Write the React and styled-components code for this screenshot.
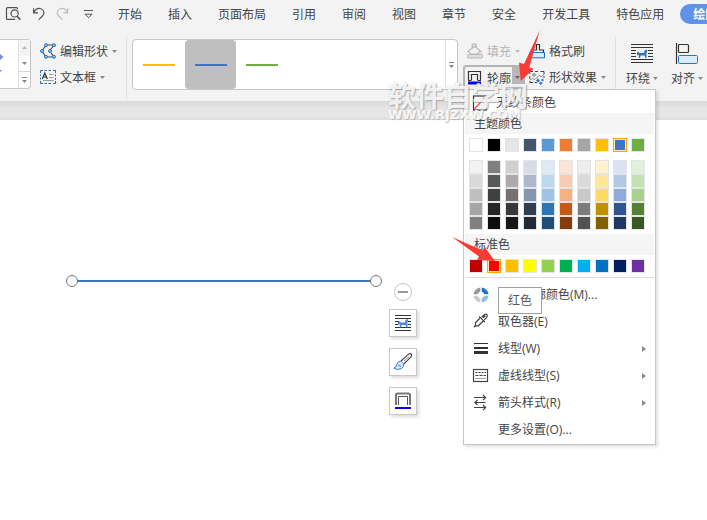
import React from "react";
import styled, { createGlobalStyle } from "styled-components";

const GlobalStyle = createGlobalStyle`
  * { box-sizing: border-box; }
  body {
    margin: 0;
    overflow: hidden;
    background: #fff;
    color: #444;
    font-family: "Open Sans", "Noto Sans CJK SC", sans-serif;
    font-size: 12px;
    line-height: 16px;
  }
  button {
    margin: 0;
    padding: 0;
    border: 0;
    background: none;
    color: inherit;
    font: inherit;
    white-space: nowrap;
  }
  svg { display: block; flex: none; overflow: visible; }
`;

const Page = styled.div`
  position: relative;
  display: flex;
  flex-direction: column;
  min-height: 100vh;
  overflow: hidden;
`;

const Header = styled.header`
  position: relative;
  z-index: 1;
  background: #f3f3f3;
`;

const TabBar = styled.nav`
  display: flex;
  align-items: center;
  height: 27px;
`;

const QuickAccess = styled.div`
  display: flex;
  gap: 9px;
  padding: 0 22px 0 5px;
`;

const Tabs = styled.div`
  display: flex;
  align-items: center;
  gap: 26px;
`;

const Tab = styled.button`
  flex: none;
  height: 20px;
  padding-top: 2px;
`;

const ActiveTab = styled(Tab)`
  margin-left: -10px;
  padding: 2px 13px 0;
  border-radius: 10px;
  background: #5f93e8;
  color: #fff;
  font-weight: 700;
`;

const Ribbon = styled.div`
  display: flex;
  height: 74px;
  padding: 10px 0 2px;
`;

const Divider = styled.div`
  flex: none;
  width: 1px;
  background: #dedede;
`;

const ShapeGallery = styled.div`
  display: flex;
  flex: none;
  width: 31px;
  height: 50px;
  margin: 2px 9px 0 0;
  border: 1px solid #c6c6c6;
  border-left: 0;
  border-radius: 0 4px 4px 0;
  background: #fff;
`;

const ShapePreview = styled.div`
  flex: 1;
`;

const Scroller = styled.div`
  display: flex;
  flex-direction: column;
  width: 12px;
  border-left: 1px solid #e2e2e2;
`;

const ScrollButton = styled.button`
  display: flex;
  flex: 1;
  align-items: center;
  justify-content: center;
  border-top: ${(p) => (p.$ruled ? "1px solid #d6d6d6" : "0")};
  background: ${(p) => (p.$muted ? "#f3f3f3" : "transparent")};
`;

const ToolColumn = styled.div`
  display: flex;
  flex: none;
  flex-direction: column;
  gap: 2px;
  padding: 2px ${(p) => p.$end || 0}px 0 0;
`;

const Tool = styled.button`
  display: flex;
  align-items: center;
  gap: 4px;
  height: 24px;
  padding-left: ${(p) => p.$inset || 0}px;
  color: ${(p) => (p.disabled ? "#b4b4b4" : "#444")};
`;

const ToolLabel = styled.span`
  padding-top: 2px;
`;

const LineGallery = styled.div`
  display: flex;
  flex: 1;
  height: 51px;
  margin: 2px 5px 0;
  border: 1px solid #c6c6c6;
  border-radius: 4px;
  background: #fff;
`;

const LineStyle = styled.button`
  display: flex;
  align-items: center;
  justify-content: center;
  width: ${(p) => (p.$selected ? 51 : 52)}px;
  border-radius: 4px;
  background: ${(p) => (p.$selected ? "#bfbfbf" : "transparent")};

  &::before {
    content: "";
    width: 32px;
    height: 2px;
    background: ${(p) => p.$color};
  }
`;

const LineMore = styled(Scroller)`
  margin-left: auto;
`;

const OutlineControl = styled.div`
  position: relative;
  display: flex;
  width: 62px;
  height: 24px;
  margin-right: 4px;
  border: 1px solid #b4b4b4;
  border-bottom: 0;
  border-radius: 3px 3px 0 0;
  box-shadow: inset 1px 1px #b4b4b4;
`;

const OutlineMain = styled.button`
  display: flex;
  flex: 1;
  align-items: center;
  gap: 4px;
  padding-left: 3px;
`;

const OutlineDrop = styled.button`
  display: flex;
  align-items: center;
  justify-content: center;
  width: 12px;
  background: #b8b8b8;
`;

const BigTools = styled.div`
  display: flex;
  flex: none;
  gap: 13px;
  padding: 5px 4px 0 10px;
`;

const BigTool = styled.button`
  display: flex;
  flex-direction: column;
  align-items: center;
  gap: 5px;
  height: 44px;
`;

const BigLabel = styled.span`
  display: flex;
  align-items: center;
  gap: 3px;
`;

const Menu = styled.div`
  position: absolute;
  z-index: 2;
  top: 23px;
  left: -1px;
  width: 193px;
  padding: 0 1px 1px;
  border: 1px solid #c6c6c6;
  background: #fff;
  box-shadow: 2px 2px 3px rgba(0, 0, 0, 0.12);
`;

const NoLine = styled.button`
  display: flex;
  align-items: center;
  gap: 8px;
  width: 100%;
  height: 23px;
  padding: 2px 0 0 7px;
`;

const SectionTitle = styled.div`
  height: 21px;
  padding: 3px 9px;
  background: #f5f5f5;
`;

const SwatchRow = styled.div`
  display: flex;
  gap: 4px;
  padding: ${(p) => p.$top}px 4px ${(p) => p.$bottom}px;
`;

const SwatchStack = styled.div`
  display: flex;
  flex-direction: column;
`;

const Swatch = styled.button`
  display: block;
  width: 14px;
  height: 14px;
  border: 1px solid ${(p) => (p.$active ? "#ffa500" : "#e2e4e7")};
  background: ${(p) => p.$color};
  box-shadow: ${(p) => (p.$active ? "inset 0 0 0 1px #ffe8a6" : "none")};
`;

const SwatchAnchor = styled.div`
  position: relative;
  height: 14px;
`;

const Tooltip = styled.div`
  position: absolute;
  z-index: 1;
  top: 28px;
  left: 11px;
  height: 27px;
  padding: 5px 9px;
  border: 1px solid #a0a0a0;
  background: #fff;
  color: #575757;
  white-space: nowrap;
`;

const MenuList = styled.div`
  padding-top: 3px;
  border-top: 1px solid #dcdcdc;
`;

const MenuItem = styled.button`
  display: flex;
  align-items: center;
  gap: 9px;
  width: 100%;
  height: 27px;
  padding: 0 8px;
`;

const Submenu = styled.svg`
  margin-left: auto;
`;

const Canvas = styled.main`
  position: relative;
  flex: 1;
  background: #fff;
`;

const TopEdge = styled.div`
  height: 19px;
  background: linear-gradient(#d9d9d9, #e5e5e5 35%, #e7e7e7 80%, #dcdcdc);
`;

const LineShape = styled.svg`
  position: absolute;
  top: 153px;
  left: 65px;
`;

const FloatingTools = styled.div`
  position: absolute;
  top: 182px;
  left: 389px;
  display: flex;
  flex-direction: column;
  align-items: center;
  gap: 11px;
`;

const CollapseButton = styled.button`
  display: flex;
  align-items: center;
  justify-content: center;
  width: 18px;
  height: 18px;
  margin-bottom: -3px;
  border: 1px solid #c6c6c6;
  border-radius: 50%;
  background: #fff;
`;

const FloatButton = styled.button`
  display: flex;
  align-items: center;
  justify-content: center;
  width: 28px;
  height: 28px;
  border: 1px solid #c8c8c8;
  background: #fff;
  box-shadow: 2px 2px 3px rgba(0, 0, 0, 0.14);
`;

const Watermark = styled.div`
  position: absolute;
  z-index: 3;
  top: 83px;
  left: 388px;
  color: rgba(255, 255, 255, 0.85);
  white-space: nowrap;
  pointer-events: none;
`;

const WatermarkName = styled.div`
  font-size: 28px;
  font-weight: 700;
  line-height: 27px;
  text-shadow: 1px 1px 1px rgba(140, 140, 140, 0.65), 0 0 2px rgba(160, 160, 160, 0.5);
`;

const WatermarkSite = styled.div`
  font-family: "DejaVu Sans", sans-serif;
  font-size: 13px;
  font-weight: 700;
  line-height: 10px;
  text-shadow: 1px 1px 1px rgba(150, 150, 150, 0.55);
`;

const Pointer = styled.svg`
  position: absolute;
  z-index: 4;
  top: ${(p) => p.$top}px;
  left: ${(p) => p.$left}px;
  pointer-events: none;
`;

const Caret = ({ color = "#8a8a8a" }) => (
  <svg width="5" height="3" viewBox="0 0 5 3"><path d="M0 0H5L2.5 3Z" fill={color} /></svg>
);

const MoreGlyph = () => (
  <svg width="5" height="6" viewBox="0 0 5 6" fill="#888">
    <path d="M0 0H5V1H0ZM0 3H5L2.5 6Z" />
  </svg>
);

const UpGlyph = () => (
  <svg width="5" height="3" viewBox="0 0 5 3"><path d="M0 3H5L2.5 0Z" fill="#b5b5b5" /></svg>
);

const PreviewIcon = () => (
  <svg width="16" height="16" viewBox="0 0 16 16" fill="none" stroke="#505050" strokeWidth="1.2">
    <path d="M12.5 3.2V2.6A1 1 0 0 0 11.6 1.6H2.5A1 1 0 0 0 1.5 2.6V12.4A1 1 0 0 0 2.5 13.4H10" />
    <circle cx="9.6" cy="7.4" r="3.6" />
    <path d="M12 10.2L15.4 13.6" strokeWidth="1.5" />
  </svg>
);

const UndoIcon = () => (
  <svg width="16" height="16" viewBox="0 0 16 16" fill="none" stroke="#555" strokeWidth="1.2">
    <path d="M3.6 2.2V6.8H8M3.8 6.5C5.5 3.2 8.2 1.8 11 2.8C14.2 4 14.8 7.8 12.7 9.8L8.7 13.6" />
  </svg>
);

const RedoIcon = () => (
  <svg width="16" height="16" viewBox="0 0 16 16" fill="none" stroke="#bdbdbd" strokeWidth="1.2">
    <path d="M12.6 2.2V6.8H8.2M12.4 6.5C10.7 3.2 8 1.8 5.2 2.8C2 4 1.4 7.8 3.5 9.8L7.5 13.6" />
  </svg>
);

const CustomizeIcon = () => (
  <svg width="16" height="16" viewBox="0 0 16 16" fill="none" stroke="#555">
    <path d="M4 4.5H13M5 8.2H12L8.5 11.7Z" />
  </svg>
);

const EditShapeIcon = () => (
  <svg width="16" height="16" viewBox="0 0 16 16" fill="none">
    <path d="M6 2L2 8L6 14M6 2H14L9.5 8L14 14H6" stroke="#444" strokeWidth="1.1" />
    <g fill="#8fc4f4" stroke="#2878c8">
      <circle cx="6" cy="2.2" r="1.5" /><circle cx="14" cy="2.2" r="1.5" />
      <circle cx="2" cy="8" r="1.5" /><circle cx="10" cy="8" r="1.5" />
      <circle cx="6" cy="13.8" r="1.5" /><circle cx="14" cy="13.8" r="1.5" />
    </g>
  </svg>
);

const TextBoxIcon = () => (
  <svg width="16" height="14" viewBox="0 0 16 14" fill="none">
    <path d="M.5 3V.5H3M4.5 .5H7M8.5 .5H11M13 .5H15.5V3M15.5 4.5V6.5M15.5 8V10M15.5 11V13.5H13M11 13.5H8.5M7 13.5H4.5M3 13.5H.5V11M.5 9.5V7.5M.5 6V4.5" stroke="#1d70bc" />
    <path d="M2.3 9L4.8 3L7.3 9M3.3 7H6.4" stroke="#333" strokeWidth="1.2" />
    <path d="M9 4.5H13.5M9 7.5H13.5M3 10.5H13.5" stroke="#999" />
  </svg>
);

const FillIcon = () => (
  <svg width="16" height="16" viewBox="0 0 16 16" fill="none" stroke="#b8b8b8">
    <path d="M5.2 4.5V2.5Q5.2 .8 7.2 .8Q9.2 .8 9.2 2.5V4M1 8.2L7.6 3.2L13.5 8L10.5 11H4Z" strokeWidth="1.2" />
    <path d="M13.5 8Q15 9.6 14.2 10.6" />
    <rect x=".5" y="11.5" width="15" height="3.5" rx="1.2" fill="#ddd" />
  </svg>
);

const OutlineIcon = () => (
  <svg width="16" height="14" viewBox="0 0 16 14" fill="none" stroke="#333">
    <path d="M1.5 9V.5H13.5V9M4.5 9V3.5H10.5V9" strokeWidth="1.2" />
    <path d="M1 9.5H4.5M10.5 9.5H14" />
    <path d="M1 12H14" stroke="#0000f5" strokeWidth="3" />
  </svg>
);

const PainterIcon = () => (
  <svg width="16" height="16" viewBox="0 0 16 16" fill="none">
    <path d="M4 8V7H7.5V1.5H10.5V7H14.5V9" stroke="#333" strokeWidth="1.2" />
    <path d="M3.5 9.5H15.5V14.8H3L1.5 13.5Q3.5 12 3.5 9.5Z" fill="#dcebfa" stroke="#1d70bc" />
  </svg>
);

const EffectIcon = () => (
  <svg width="16" height="15" viewBox="0 0 16 15" fill="none">
    <path d="M4 1.5H.8V4M6 1.5H9M11.5 1.5H15V4.5M15 6V8M.8 6V9M.8 11V12.5H4M5.5 12.5H8" stroke="#444" />
    <circle cx="5" cy="5" r="1.3" stroke="#777" />
    <path d="M1 10L3.5 8.5L6 9.5L10 5.5L12.5 6.5L15 4.5" stroke="#888" />
    <path d="M9 8.5L11 10.5L9 12.5L7 10.5ZM13.5 8.5L15 10L13.5 11.5L12 10ZM11.8 11.5L13.6 13.3L11.8 15L10 13.3Z" fill="#2878c8" />
  </svg>
);

const Dog = ({ color }) => (
  <path d="M7 9.5L8.5 8.8L9.5 10H14L14.5 7.5L16.5 6.5L17.5 8L16.5 9.5V15H15.3L14.6 12.5H10.6L10 15H8.8V11.5L7 12.5Z" fill={color} />
);

const WrapIcon = () => (
  <svg width="24" height="22" viewBox="0 0 24 22">
    <path d="M1 2.5H23M1 5.5H23M1 8.5H6M1 11.5H6M1 14.5H6M18 8.5H23M18 11.5H23M18 14.5H23M1 17.5H23M1 20.5H23" stroke="#333" />
    <g transform="translate(0 1)"><Dog color="#2878c8" /></g>
  </svg>
);

const AlignIcon = () => (
  <svg width="24" height="22" viewBox="0 0 24 22" fill="none">
    <path d="M1.5 1V22" stroke="#333" strokeWidth="1.2" />
    <rect x="3.5" y="2.5" width="10" height="8" rx="1" stroke="#333" strokeWidth="1.2" />
    <rect x="3.5" y="13.5" width="19" height="8" rx="1" fill="#dcebfa" stroke="#2878c8" />
  </svg>
);

const NoLineIcon = () => (
  <svg width="16" height="16" viewBox="0 0 16 16" fill="none">
    <rect x="1.5" y="1" width="13" height="14" stroke="#333" strokeWidth="1.2" />
    <path d="M2 14.5L14 1.5" stroke="#d55" strokeWidth="1.3" />
  </svg>
);

const PaletteIcon = () => (
  <svg width="16" height="16" viewBox="0 0 16 16">
    <path d="M7.3 .5A7.5 7.5 0 0 0 .5 7.3H4.3L7.3 4.3Z" fill="#9a9a9a" />
    <path d="M8.7 .5A7.5 7.5 0 0 1 15.5 7.3H11.7L8.7 4.3Z" fill="#2072cc" />
    <path d="M15.5 8.7A7.5 7.5 0 0 1 8.7 15.5V11.7L11.7 8.7Z" fill="#91bae9" />
    <path d="M.5 8.7A7.5 7.5 0 0 0 7.3 15.5V11.7L4.3 8.7Z" fill="#cbcbcb" />
  </svg>
);

const DropperIcon = () => (
  <svg width="16" height="16" viewBox="0 0 16 16" fill="none" stroke="#444" strokeWidth="1.2">
    <path d="M7.5 3.5L2.5 8.8V11L1 13L3.2 11.8H5.2L11 6.5" />
    <path d="M6.2 2.3L11.8 8M8.7 3.2L11 1Q13 -.5 14 .7Q15 2 13.3 3.8L11.3 5.8" />
    <path d="M10 3.5L12.2 1.5" strokeWidth="2" />
  </svg>
);

const WeightIcon = () => (
  <svg width="16" height="16" viewBox="0 0 16 16" fill="#333">
    <path d="M1 2H15V3H1ZM1 6H15V8H1ZM1 10H15V13H1Z" />
  </svg>
);

const DashIcon = () => (
  <svg width="16" height="16" viewBox="0 0 16 16" fill="none" stroke="#444">
    <rect x=".5" y="1.5" width="14" height="12" strokeWidth="1.2" />
    <path d="M2.5 4.5H13" strokeDasharray="2 1" />
    <path d="M2.5 7.5H13" strokeDasharray="3 1" />
    <path d="M2.5 10.5H13" strokeDasharray="1 1" />
  </svg>
);

const ArrowsIcon = () => (
  <svg width="16" height="16" viewBox="0 0 16 16" fill="none" stroke="#444" strokeWidth="1.1">
    <path d="M1 2.5H12.5M10 0L12.7 2.5L10 5M12.5 7.5H2M4.5 5L1.7 7.5L4.5 10M1 12.5H12.5M10 10L12.7 12.5L10 15" />
  </svg>
);

const BlankIcon = () => <svg width="16" height="16" viewBox="0 0 16 16" />;

const FloatWrapIcon = () => (
  <svg width="18" height="18" viewBox="0 0 18 18">
    <path d="M1 1.5H17M1 4.5H17M1 7.5H5M1 10.5H4M14 7.5H17M14 10.5H17M1 13.5H17M1 16.5H17" stroke="#333" strokeWidth="1.1" />
    <g transform="translate(-3 -1.5)"><Dog color="#4b87da" /></g>
  </svg>
);

const BrushIcon = () => (
  <svg width="20" height="18" viewBox="0 0 20 18" fill="none">
    <path d="M8 8L15.5 1.2Q17.5 0 18.5 1.5Q19 3 17.8 4.2L10.8 11" stroke="#444" strokeWidth="1.1" />
    <path d="M11 8L16 3.5" stroke="#888" />
    <path d="M8 8Q5 8 4 11Q3.5 14.5 .8 15.2Q4 17.4 8 15.8Q11 14.5 10.8 11Z" fill="#dcebfa" stroke="#3d80d4" />
    <path d="M5 12L8 13.5" stroke="#3d80d4" />
  </svg>
);

const FloatOutlineIcon = () => (
  <svg width="18" height="18" viewBox="0 0 18 18" fill="none">
    <path d="M2 13V3Q2 1.5 3.5 1.5H14.5Q16 1.5 16 3V13" stroke="#777" strokeWidth="2" />
    <path d="M4.5 13V4.5H13.5V13" stroke="#555" />
    <path d="M1 16H17" stroke="#0000f5" strokeWidth="2" />
  </svg>
);

const tabs = ["开始", "插入", "页面布局", "引用", "审阅", "视图", "章节", "安全", "开发工具", "特色应用"];

const themeColors = ["#ffffff", "#000000", "#e7e6e6", "#44546a", "#5b9bd5", "#ed7d31", "#a5a5a5", "#ffc000", "#4472c4", "#70ad47"];

const themeTints = [
  ["#f2f2f2", "#d9d9d9", "#bfbfbf", "#a6a6a6", "#808080"],
  ["#808080", "#595959", "#404040", "#262626", "#0d0d0d"],
  ["#d0cece", "#aeaaaa", "#757171", "#3a3838", "#181717"],
  ["#d6dce5", "#adb9ca", "#8497b0", "#333f50", "#222a35"],
  ["#deebf7", "#bdd7ee", "#9dc3e6", "#2e75b6", "#1f4e79"],
  ["#fbe5d6", "#f8cbad", "#f4b183", "#c55a11", "#843c0c"],
  ["#ededed", "#dbdbdb", "#c9c9c9", "#7c7c7c", "#525252"],
  ["#fff2cc", "#ffe699", "#ffd966", "#bf9000", "#806000"],
  ["#dae3f3", "#b4c7e7", "#8faadc", "#2f5597", "#203864"],
  ["#e2f0d9", "#c5e0b4", "#a9d18e", "#548235", "#385723"],
];

const standardColors = ["#c00000", "#ff0000", "#ffc000", "#ffff00", "#92d050", "#00b050", "#00b0f0", "#0070c0", "#002060", "#7030a0"];

const menuItems = [
  { label: "其他轮廓颜色(M)...", Icon: PaletteIcon },
  { label: "取色器(E)", Icon: DropperIcon },
  { label: "线型(W)", Icon: WeightIcon, submenu: true },
  { label: "虚线线型(S)", Icon: DashIcon, submenu: true },
  { label: "箭头样式(R)", Icon: ArrowsIcon, submenu: true },
  { label: "更多设置(O)...", Icon: BlankIcon },
];

function OutlineMenu() {
  return (
    <Menu>
      <NoLine><NoLineIcon />无线条颜色</NoLine>
      <SectionTitle>主题颜色</SectionTitle>
      <SwatchRow $top={4} $bottom={8}>
        {themeColors.map((c) => (
          <Swatch key={c} $color={c} $active={c === "#4472c4"} aria-label={c} />
        ))}
      </SwatchRow>
      <SwatchRow $top={0} $bottom={4}>
        {themeTints.map((column, i) => (
          <SwatchStack key={i}>
            {column.map((c) => <Swatch key={c} $color={c} aria-label={c} />)}
          </SwatchStack>
        ))}
      </SwatchRow>
      <SectionTitle>标准色</SectionTitle>
      <SwatchRow $top={4} $bottom={4}>
        {standardColors.map((c) => (
          <SwatchAnchor key={c}>
            <Swatch $color={c} $active={c === "#ff0000"} aria-label={c} />
            {c === "#ff0000" && <Tooltip role="tooltip">红色</Tooltip>}
          </SwatchAnchor>
        ))}
      </SwatchRow>
      <MenuList>
        {menuItems.map(({ label, Icon, submenu }) => (
          <MenuItem key={label}>
            <Icon />
            {label}
            {submenu && (
              <Submenu width="4" height="6" viewBox="0 0 4 6"><path d="M0 0L4 3L0 6Z" fill="#8a8a8a" /></Submenu>
            )}
          </MenuItem>
        ))}
      </MenuList>
    </Menu>
  );
}

export default function App() {
  return (
    <Page>
      <GlobalStyle />
      <Header>
        <TabBar>
          <QuickAccess>
            <button aria-label="打印预览"><PreviewIcon /></button>
            <button aria-label="撤销"><UndoIcon /></button>
            <button aria-label="恢复"><RedoIcon /></button>
            <button aria-label="自定义"><CustomizeIcon /></button>
          </QuickAccess>
          <Tabs>
            {tabs.map((t) => <Tab key={t}>{t}</Tab>)}
            <ActiveTab>绘图工具</ActiveTab>
          </Tabs>
        </TabBar>
        <Ribbon>
          <ShapeGallery>
            <ShapePreview>
              <svg width="6" height="48" viewBox="0 0 6 48">
                <path d="M0 14L3.5 17L0 20ZM0 30H1.5V31.5H0Z" fill="#6f8fd0" />
              </svg>
            </ShapePreview>
            <Scroller>
              <ScrollButton $muted aria-label="上一行"><UpGlyph /></ScrollButton>
              <ScrollButton aria-label="下一行"><Caret /></ScrollButton>
              <ScrollButton $ruled aria-label="更多形状"><MoreGlyph /></ScrollButton>
            </Scroller>
          </ShapeGallery>
          <ToolColumn $end={9}>
            <Tool><EditShapeIcon /><ToolLabel>编辑形状</ToolLabel><Caret /></Tool>
            <Tool><TextBoxIcon /><ToolLabel>文本框</ToolLabel><Caret /></Tool>
          </ToolColumn>
          <Divider />
          <LineGallery>
            <LineStyle $color="#ffc000" aria-label="黄色线条" />
            <LineStyle $color="#4472c4" $selected aria-label="蓝色线条" />
            <LineStyle $color="#70ad47" aria-label="绿色线条" />
            <LineMore>
              <ScrollButton aria-label="更多线条"><MoreGlyph /></ScrollButton>
            </LineMore>
          </LineGallery>
          <ToolColumn>
            <Tool disabled $inset={4}><FillIcon /><ToolLabel>填充</ToolLabel><Caret color="#bdbdbd" /></Tool>
            <OutlineControl>
              <OutlineMain><OutlineIcon /><ToolLabel>轮廓</ToolLabel></OutlineMain>
              <OutlineDrop aria-label="轮廓选项"><Caret color="#666" /></OutlineDrop>
              <OutlineMenu />
            </OutlineControl>
          </ToolColumn>
          <ToolColumn $end={9}>
            <Tool><PainterIcon /><ToolLabel>格式刷</ToolLabel></Tool>
            <Tool><EffectIcon /><ToolLabel>形状效果</ToolLabel><Caret /></Tool>
          </ToolColumn>
          <Divider />
          <BigTools>
            <BigTool><WrapIcon /><BigLabel><ToolLabel>环绕</ToolLabel><Caret /></BigLabel></BigTool>
            <BigTool><AlignIcon /><BigLabel><ToolLabel>对齐</ToolLabel><Caret /></BigLabel></BigTool>
          </BigTools>
        </Ribbon>
      </Header>
      <Canvas>
        <TopEdge />
        <LineShape width="318" height="54" viewBox="0 0 318 54">
          <path d="M7 27H311" stroke="#3d73c6" strokeWidth="2" />
          <circle cx="7" cy="27" r="5.5" fill="#fff" stroke="#777" />
          <circle cx="311" cy="27" r="5.5" fill="#fff" stroke="#777" />
        </LineShape>
        <FloatingTools>
          <CollapseButton aria-label="收起">
            <svg width="10" height="2" viewBox="0 0 10 2"><path d="M0 0H10V2H0Z" fill="#999" /></svg>
          </CollapseButton>
          <FloatButton aria-label="环绕方式"><FloatWrapIcon /></FloatButton>
          <FloatButton aria-label="形状样式"><BrushIcon /></FloatButton>
          <FloatButton aria-label="形状轮廓"><FloatOutlineIcon /></FloatButton>
        </FloatingTools>
      </Canvas>
      <Watermark>
        <WatermarkName>软件自学网</WatermarkName>
        <WatermarkSite>WWW.RJZXW.COM</WatermarkSite>
      </Watermark>
      <Pointer $top={30} $left={518} width="24" height="52" viewBox="0 0 24 52">
        <path d="M21.7 .5L11.2 37.5L15.7 38.7L2.7 51L1 32.5L6 34Z" fill="#f93a35" />
      </Pointer>
      <Pointer $top={236} $left={451} width="46" height="26" viewBox="0 0 46 26">
        <path d="M1 1L31.5 14.5L33.5 11L44 25L26 24L28 20.5Z" fill="#f93a35" />
      </Pointer>
    </Page>
  );
}
